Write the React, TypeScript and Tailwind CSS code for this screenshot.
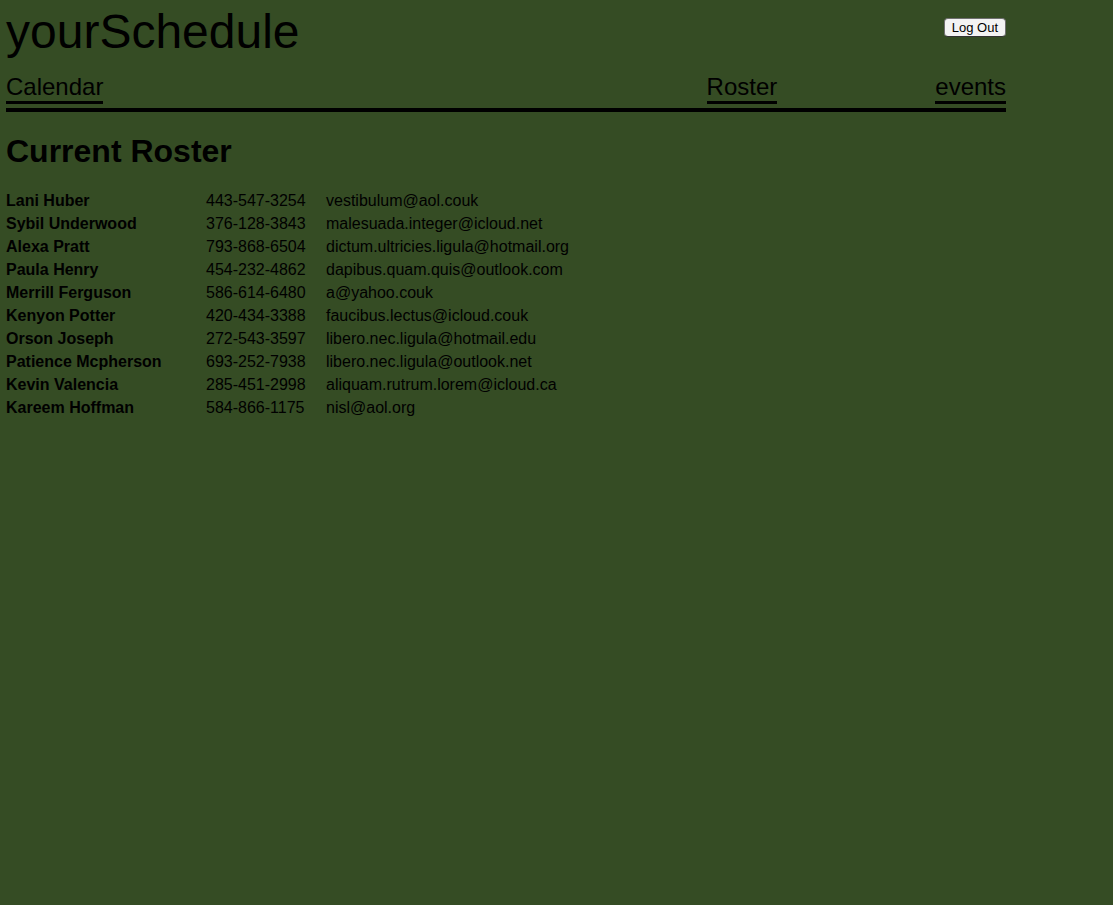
const roster = [
  { name: 'Lani Huber', phone: '443-547-3254', email: 'vestibulum@aol.couk' },
  { name: 'Sybil Underwood', phone: '376-128-3843', email: 'malesuada.integer@icloud.net' },
  { name: 'Alexa Pratt', phone: '793-868-6504', email: 'dictum.ultricies.ligula@hotmail.org' },
  { name: 'Paula Henry', phone: '454-232-4862', email: 'dapibus.quam.quis@outlook.com' },
  { name: 'Merrill Ferguson', phone: '586-614-6480', email: 'a@yahoo.couk' },
  { name: 'Kenyon Potter', phone: '420-434-3388', email: 'faucibus.lectus@icloud.couk' },
  { name: 'Orson Joseph', phone: '272-543-3597', email: 'libero.nec.ligula@hotmail.edu' },
  { name: 'Patience Mcpherson', phone: '693-252-7938', email: 'libero.nec.ligula@outlook.net' },
  { name: 'Kevin Valencia', phone: '285-451-2998', email: 'aliquam.rutrum.lorem@icloud.ca' },
  { name: 'Kareem Hoffman', phone: '584-866-1175', email: 'nisl@aol.org' },
];

export default function App() {
  return (
    <div className="min-h-[905px] bg-[#354c24] text-black font-['Liberation_Sans',Arial,sans-serif]">
      <div className="w-[1000px] ml-[6px]">
        <header className="flex justify-between items-start pt-[4px]">
          <h1 className="text-[48px] leading-[56px] font-normal">yourSchedule</h1>
          <button className="mt-[14px] h-[19px] px-[7px] text-[13px] leading-[15px] bg-[#f3f3f3] border border-[#6f6f6f] border-b-[#333] rounded-[4px]">
            Log Out
          </button>
        </header>

        <nav className="flex mt-[13px] text-[24px] leading-[28px]">
          <a className="border-b-[3px] border-black">Calendar</a>
          <a className="ml-auto border-b-[3px] border-black">Roster</a>
          <a className="ml-[158px] border-b-[3px] border-black">events</a>
        </nav>
        <div className="mt-[4px] h-[4px] bg-black" />

        <h2 className="mt-[21px] text-[32px] leading-[36px] font-bold">Current Roster</h2>

        <table className="mt-[20px] text-[16px] leading-[23px] border-collapse">
          <tbody>
            {roster.map((r) => (
              <tr key={r.name}>
                <td className="w-[200px] p-0 font-bold">{r.name}</td>
                <td className="w-[120px] p-0">{r.phone}</td>
                <td className="p-0">{r.email}</td>
              </tr>
            ))}
          </tbody>
        </table>
      </div>
    </div>
  );
}
